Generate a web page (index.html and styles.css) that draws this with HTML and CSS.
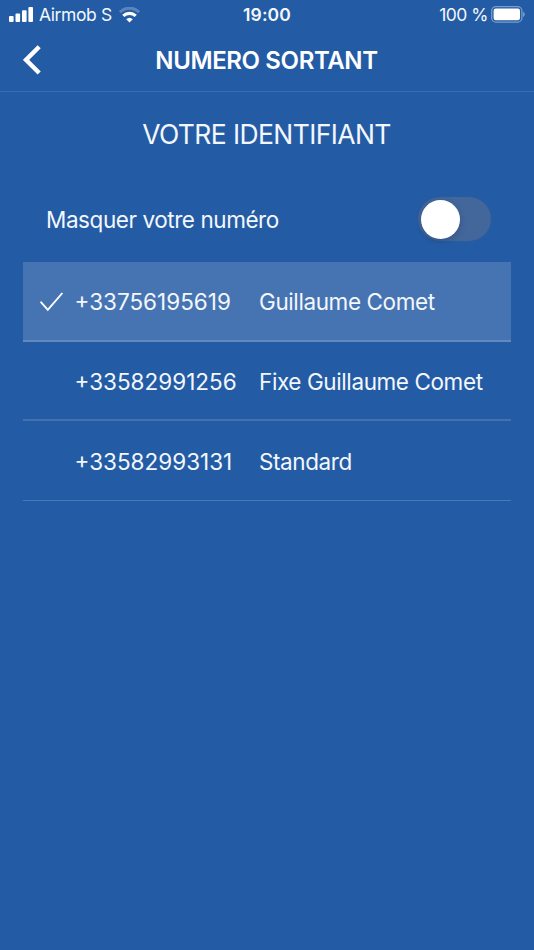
FILE: index.html
```html
<!DOCTYPE html>
<html lang="fr">
  <head>
    <meta charset="utf-8">
    <meta name="viewport" content="width=device-width, initial-scale=1">
    <title>Numero sortant</title>
    <link rel="stylesheet" href="styles.css">
  </head>

  <body>

    <div class="status">
      <div class="carrier">
        <svg width="24" height="15" viewBox="0 0 24 15" fill="#fff">
          <rect x="0" y="9" width="4.6" height="6" rx="1"/>
          <rect x="6.5" y="6.5" width="4.6" height="8.5" rx="1"/>
          <rect x="13" y="3.2" width="4.6" height="11.8" rx="1"/>
          <rect x="19.4" y="0" width="4.6" height="15" rx="1"/>
        </svg>
        <span class="operator">Airmob S</span>
        <svg class="wifi" width="21" height="16" viewBox="0 0 21 16" fill="none" stroke="#fff">
          <path d="M.9 5.1a13.6 13.6 0 0 1 19.2 0" stroke-width="3" opacity=".25"/>
          <path d="M4.3 8.9a8.8 8.8 0 0 1 12.4 0" stroke-width="3.2"/>
          <path d="M7.2 12.2a4.8 4.8 0 0 1 6.6 0L10.5 15.6z" fill="#fff" stroke="none"/>
        </svg>
      </div>
      <div class="clock">19:00</div>
      <div class="battery">
        <span class="percent">100 %</span>
        <svg width="34" height="17" viewBox="0 0 34 17">
          <rect x=".7" y=".7" width="30.2" height="15.4" rx="4.2" fill="none" stroke="#fff" stroke-width="1.3" opacity=".4"/>
          <rect x="2.6" y="2.6" width="26.4" height="11.6" rx="2.2" fill="#fff"/>
          <path d="M32.2 5.8a3 3 0 0 1 0 5.2z" fill="#fff" opacity=".45"/>
        </svg>
      </div>
    </div>

    <header class="navbar">
      <svg class="back" width="18" height="30" viewBox="0 0 18 30" fill="none" stroke="#fff" stroke-width="4.4">
        <path d="M16.2 1.8L3 14.9L16.2 28"/>
      </svg>
      <h1>NUMERO SORTANT</h1>
    </header>

    <h2>VOTRE IDENTIFIANT</h2>

    <div class="mask">
      <span>Masquer votre numéro</span>
      <div class="switch"><div class="knob"></div></div>
    </div>

    <ul class="numbers">
      <li class="selected">
        <svg class="check" width="24" height="20" viewBox="0 0 24 20" fill="none" stroke="#fff" stroke-width="1.9">
          <path d="M.5 9.7L7.8 17.9L22.4 1"/>
        </svg>
        <span class="phone">+33756195619</span>
        <span class="name">Guillaume Comet</span>
      </li>
      <li>
        <span class="phone">+33582991256</span>
        <span class="name">Fixe Guillaume Comet</span>
      </li>
      <li>
        <span class="phone">+33582993131</span>
        <span class="name">Standard</span>
      </li>
    </ul>

  </body>
</html>
```

FILE: styles.css
```css
* {
  box-sizing: border-box;
}

body {
  margin: 0;
  min-height: 950px;
  background-color: #235ca5;
  color: #f3f7fc;
  font-family: Inter, "Liberation Sans", sans-serif;
}

svg {
  display: block;
  flex: none;
}

/* status bar */
.status {
  display: grid;
  grid-template-columns: 1fr auto 1fr;
  align-items: center;
  height: 30px;
  padding: 0 9px;
  font-size: 17.5px;
  line-height: 30px;
}

.carrier, .battery {
  display: flex;
  align-items: center;
}

.carrier svg:first-child {
  margin-top: -1px;
}

.operator {
  margin-left: 6px;
  letter-spacing: -0.4px;
}

.wifi {
  margin-left: 7px;
}

.clock {
  letter-spacing: 0.1px;
  font-weight: 600;
}

.battery {
  justify-content: flex-end;
}

.percent {
  margin-right: 3px;
  letter-spacing: -0.5px;
}

.battery svg {
  margin-top: -2px;
}

/* title bar */
.navbar {
  display: flex;
  align-items: center;
  height: 62px;
  padding-left: 23px;
  border-bottom: 1px solid #3d6db1;
}

.back {
  margin-top: -2px;
}

h1 {
  flex: 1;
  margin: 0 42px 0 0;
  color: #fff;
  font-size: 24px;
  font-weight: 600;
  letter-spacing: -0.38px;
  line-height: 30px;
  text-align: center;
}

h2 {
  margin: 26px 1px 0 0;
  font-size: 26.5px;
  font-weight: 400;
  letter-spacing: -0.6px;
  line-height: 32px;
  text-align: center;
}

.mask {
  display: flex;
  align-items: center;
  justify-content: space-between;
  height: 44px;
  margin: 47px 43px 0 46px;
  font-size: 22.5px;
  letter-spacing: -0.43px;
}

.switch {
  width: 73px;
  height: 44px;
  padding: 2.5px;
  border-radius: 22px;
  background-color: #43669b;
}

.knob {
  width: 39px;
  height: 39px;
  border-radius: 50%;
  background-color: #fff;
  box-shadow: 0 2px 6px rgba(0, 0, 0, 0.2);
}

/* list of outgoing numbers */
.numbers {
  margin: 21px 23.5px 0 23px;
  padding: 0;
  list-style: none;
  font-size: 22.5px;
}

.numbers li {
  display: grid;
  grid-template-columns: 52px 184px 1fr;
  align-items: center;
  height: 79.7px;
  padding-top: 1px;
  border-bottom: 1px solid #4c79b5;
}

.numbers li:nth-child(2) {
  border-bottom: 2px solid #4371b0;
}

.numbers .selected {
  padding-top: 2px;
  background-color: #4674b2;
  border-bottom: 2px solid #6189bf;
}

.check {
  margin-left: 17px;
}

.phone {
  grid-column: 2;
  margin-left: -0.5px;
}

.name {
  letter-spacing: -0.4px;
}
```
